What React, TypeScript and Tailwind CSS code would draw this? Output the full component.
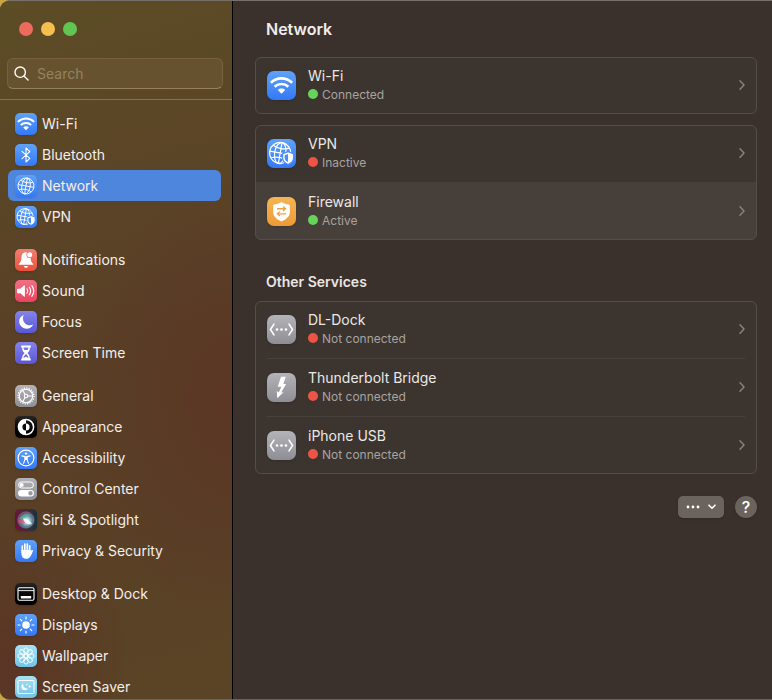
import React, { useState } from 'react';

type IconName =
  | 'wifi' | 'bluetooth' | 'globe' | 'vpn' | 'bell' | 'sound' | 'moon' | 'hourglass'
  | 'gear' | 'appearance' | 'accessibility' | 'toggles' | 'siri' | 'hand' | 'dock'
  | 'sun' | 'flower' | 'saver' | 'firewall' | 'ethernet' | 'bolt';

const BLUE = 'bg-linear-to-b from-[#5fa2f8] to-[#3478f6]';
const GRAY = 'bg-linear-to-b from-[#b4b3b8] to-[#8f8e94]';
const BLACK = 'bg-linear-to-b from-[#262626] to-[#000000]';
const PURPLE = 'bg-linear-to-b from-[#8583ec] to-[#5a56d6]';
const CYAN = 'bg-linear-to-b from-[#a5e2f5] to-[#6fc4e8]';

const tiles: Record<IconName, string> = {
  wifi: BLUE,
  bluetooth: BLUE,
  globe: BLUE,
  vpn: BLUE,
  bell: 'bg-linear-to-b from-[#f07f72] to-[#ea4f3d]',
  sound: 'bg-linear-to-b from-[#ef6f86] to-[#ea4360]',
  moon: PURPLE,
  hourglass: PURPLE,
  gear: GRAY,
  appearance: BLACK,
  accessibility: BLUE,
  toggles: GRAY,
  siri: 'bg-linear-to-r from-[#6a1036] to-[#0c3340]',
  hand: BLUE,
  dock: BLACK,
  sun: BLUE,
  flower: CYAN,
  saver: CYAN,
  firewall: 'bg-linear-to-b from-[#f5b555] to-[#ee9a35]',
  ethernet: GRAY,
  bolt: GRAY,
};

const globeLines = (
  <g fill="none" stroke="#fff" strokeWidth="0.9" transform="rotate(10 11 11)">
    <circle cx="11" cy="11" r="8" />
    <ellipse cx="11" cy="11" rx="4.2" ry="8" />
    <path d="M11 3v16M3 11h16M4.8 6.2c3.6 1.9 8.8 1.9 12.4 0M4.8 15.8c3.6-1.9 8.8-1.9 12.4 0" />
  </g>
);

const glyphs: Record<IconName, React.ReactNode> = {
  wifi: (
    <>
      <g fill="none" stroke="#fff" strokeWidth="2">
        <path d="M2.9 8.9c4.6-4.4 11.6-4.4 16.2 0" />
        <path d="M5.8 12c3-2.8 7.4-2.8 10.4 0" />
      </g>
      <path d="M8.2 14.4c1.6-1.4 4-1.4 5.6 0L11 17.3z" fill="#fff" />
    </>
  ),
  bluetooth: (
    <path d="M7 7.4l7.8 6.9L11 18V4l3.8 3.7L7 14.6" fill="none" stroke="#fff" strokeWidth="1.1" strokeLinejoin="round" strokeLinecap="round" />
  ),
  globe: globeLines,
  vpn: (
    <>
      <g transform="translate(-1 -0.4)">{globeLines}</g>
      <path d="M16 9.6l4.1 1.5v3.5c0 2.3-1.8 3.7-4.1 4.7-2.3-1-4.1-2.4-4.1-4.7v-3.5z" fill="#fff" stroke="#4a8df7" strokeWidth="0.9" />
      <path d="M16 11.4v6.2c-1.6-.8-2.6-1.6-2.6-3.1v-2.2z" fill="#4a8df7" />
    </>
  ),
  bell: (
    <>
      <path d="M11 3.3c-3 0-4.6 2.2-4.6 5.2 0 3.4-.8 4.8-2.6 6.4v.9h14.4v-.9c-1.8-1.6-2.6-3-2.6-6.4 0-3-1.6-5.2-4.6-5.2z" fill="#fff" />
      <path d="M9 16.9h4c-.2 1.2-1 1.900-2 1.900s-1.800-.7-2-1.900z" fill="#fff" />
      <circle cx="14.7" cy="5.7" r="3.3" fill="#ee6f61" />
      <circle cx="14.7" cy="5.7" r="2.5" fill="#fff" />
    </>
  ),
  sound: (
    <>
      <path d="M2.6 8.700h2.700l3.700-3.300c.4-.3.9-.1.9.4v10.400c0 .5-.5.7-.9.4l-3.700-3.300H2.600c-.4 0-.6-.2-.6-.6V9.300c0-.4.2-.6.6-.6z" fill="#fff" />
      <path d="M12 8.800c.9 1.300.9 3.100 0 4.400M14.300 7.300c1.600 2.200 1.600 5.200 0 7.400M16.800 5.700c2.400 3.200 2.400 7.400 0 10.600" fill="none" stroke="#fff" strokeWidth="1.1" strokeLinecap="round" />
    </>
  ),
  moon: <path d="M8.600 4.100c-3 1.200-4.700 4-4.400 7 .4 3.800 3.700 6.700 7.500 6.700 2.900 0 5.400-1.700 6.400-4.200-1 .5-2 .7-3.100.7-4 0-7-3.100-7-6.900 0-1.200.2-2.300.6-3.300z" fill="#fff" />,
  hourglass: (
    <path fillRule="evenodd" d="M6.200 3.500h9.600v1.900h-.9c0 2.600-.8 4-2.500 5.600 1.700 1.600 2.500 3 2.500 5.600h.9v1.900H6.200v-1.900h.9c0-2.600.8-4 2.500-5.600-1.700-1.600-2.500-3-2.500-5.600h-.9zM8.500 5.400c.1 1 .4 1.900.9 2.600h3.200c.5-.7.8-1.600.9-2.600zM11 12c-1.500 1.300-2.300 2.600-2.500 4.200L11 14.500l2.500 1.700c-.2-1.600-1-2.900-2.500-4.200z" fill="#fff" />
  ),
  gear: (
    <>
      <circle cx="11" cy="11" r="7.9" fill="none" stroke="#fff" strokeWidth="1.4" strokeDasharray="1.24 1.24" />
      <g fill="none" stroke="#fff" strokeWidth="1.1">
        <circle cx="11" cy="11" r="6.7" />
        <circle cx="11" cy="11" r="1.7" />
        <path d="M12.700 11h5M10.100 9.500L7.700 5.200M10.100 12.500l-2.400 4.300" />
      </g>
    </>
  ),
  appearance: (
    <>
      <circle cx="11" cy="11" r="7.6" fill="none" stroke="#fff" strokeWidth="1.5" />
      <path d="M11 3.400a7.600 7.600 0 0 0 0 15.200v-4a3.600 3.600 0 0 1 0-7.200z" fill="#fff" />
      <path d="M11 7.400a3.600 3.600 0 0 1 0 7.200z" fill="#fff" />
    </>
  ),
  accessibility: (
    <>
      <circle cx="11" cy="11" r="7.9" fill="none" stroke="#fff" strokeWidth="1.2" />
      <circle cx="11" cy="6.6" r="1.2" fill="#fff" />
      <path d="M6.900 8.900l3 .7v2.700l-1.300 4M15.100 8.900l-3 .7v2.700l1.300 4" fill="none" stroke="#fff" strokeWidth="1.1" strokeLinecap="round" strokeLinejoin="round" />
      <path d="M9.700 9.200h2.600v3.800H9.700z" fill="#fff" />
    </>
  ),
  toggles: (
    <>
      <rect x="3.6" y="4" width="14.8" height="6" rx="3" fill="none" stroke="#fff" strokeWidth="1" />
      <circle cx="6.6" cy="7" r="2.1" fill="#fff" />
      <rect x="3.1" y="12" width="15.8" height="6.6" rx="3.3" fill="#fff" />
      <circle cx="15.5" cy="15.3" r="2.2" fill="#9b9a9f" />
    </>
  ),
  siri: (
    <>
      <defs>
        <radialGradient id="siri" cx="0.55" cy="0.55" r="0.55">
          <stop offset="0" stopColor="#ffffff" />
          <stop offset="0.3" stopColor="#a3d3e0" />
          <stop offset="0.65" stopColor="#5c7f92" />
          <stop offset="1" stopColor="#7a3a68" />
        </radialGradient>
      </defs>
      <circle cx="11" cy="11" r="8.2" fill="url(#siri)" />
      <path d="M4 10c3-5 9-7 13-3-4-1-7 0-9 4z" fill="#4cc08d" opacity="0.6" />
      <path d="M3.500 12c2-3 5-3 8.500 0-3 3-7 4-8.500 0z" fill="#e0527f" opacity="0.7" />
      <path d="M8 9.500c4 0 7 2 9 5.500-4 1-8-1-9-5.500z" fill="#fff" opacity="0.85" />
      <circle cx="11" cy="11" r="8.2" fill="none" stroke="#b0a0b8" strokeWidth="0.5" opacity="0.7" />
    </>
  ),
  hand: (
    <>
      <path d="M7.300 6.200v6M9.800 4.200v7M12.300 4v7M14.700 5.900v6" stroke="#fff" strokeWidth="1.7" strokeLinecap="round" />
      <path d="M6.450 10h9.100v1.500l1-1.300c.6-.7 1.800-.1 1.400.8-1 2.600-1.800 4.600-2.900 5.900-1 1.200-2.200 1.800-3.900 1.800-3 0-4.700-1.900-4.700-5z" fill="#fff" />
    </>
  ),
  dock: (
    <>
      <rect x="3" y="4.8" width="16" height="12.4" rx="1.4" fill="none" stroke="#fff" strokeWidth="1.1" />
      <path d="M3 7.600h16" stroke="#fff" strokeWidth="0.9" />
      <rect x="5.8" y="13" width="10.4" height="2.4" rx="0.4" fill="#fff" />
    </>
  ),
  sun: (
    <>
      <circle cx="11" cy="11" r="3.8" fill="#fff" />
      <path d="M11 3v2M11 17v2M3 11h2M17 11h2M5.300 5.300l1.500 1.500M15.200 15.200l1.500 1.500M5.300 16.700l1.500-1.500M15.200 6.800l1.500-1.500" stroke="#fff" strokeWidth="1.2" strokeLinecap="round" />
    </>
  ),
  flower: (
    <g fill="none" stroke="#fff" strokeWidth="0.9">
      {[0, 45, 90, 135, 180, 225, 270, 315].map(a => (
        <ellipse key={a} cx="11" cy="6" rx="2.3" ry="3.2" transform={`rotate(${a} 11 11)`} />
      ))}
      <circle cx="11" cy="11" r="2" />
    </g>
  ),
  saver: (
    <>
      <rect x="3" y="4.5" width="16" height="13" rx="0.8" fill="none" stroke="#fff" strokeWidth="1" />
      <path d="M8.400 7.800c-1.400.6-2.200 1.900-2 3.400.2 1.800 1.700 3.100 3.500 3.100 1.400 0 2.600-.8 3.100-2-3 .7-5.200-1.500-4.600-4.500z" fill="#fff" />
      <path d="M14.700 8.800l.5 1.300 1.300.5-1.300.5-.5 1.300-.5-1.300-1.300-.5 1.300-.5zM11.900 7.500l.3.8.8.3-.8.3-.3.8-.3-.8-.8-.3.8-.3z" fill="#fff" />
    </>
  ),
  firewall: (
    <>
      <path d="M11 3.700c1.800 1.200 3.600 1.800 5.400 1.900.6.100.9.400.9 1v5c0 3.200-2.600 5.300-6.300 6.900-3.700-1.600-6.300-3.700-6.300-6.900v-5c0-.6.3-.9.900-1 1.800-.1 3.600-.7 5.400-1.900z" fill="#fff" />
      <path d="M7.600 8.900h6.400M12.200 7.200l1.900 1.700-1.900 1.700M14.400 12.800H8M9.800 11.100l-1.900 1.700 1.900 1.700" fill="none" stroke="#efa040" strokeWidth="1" />
    </>
  ),
  ethernet: (
    <>
      <path d="M5.300 6.900L2.600 11l2.700 4.100M16.700 6.900l2.700 4.100-2.700 4.100" fill="none" stroke="#fff" strokeWidth="1.2" strokeLinecap="round" strokeLinejoin="round" />
      <circle cx="7.600" cy="11" r="1" fill="#fff" />
      <circle cx="11" cy="11" r="1" fill="#fff" />
      <circle cx="14.400" cy="11" r="1" fill="#fff" />
    </>
  ),
  bolt: <path d="M10.600 2.800h3.700L12.400 8.300h2.100l-3.700 6.500 1.700-.2-4.700 4.600-.4-5.600 1.500 1.100 2-4.200H8.200z" fill="#fff" />,
};

function Tile({ name, large }: { name: IconName; large?: boolean }) {
  return (
    <span className={`block shrink-0 overflow-hidden shadow-sm ${large ? 'size-[29px] rounded-[7px]' : 'size-[22px] rounded-[5px]'} ${tiles[name]}`}>
      <svg viewBox="0 0 22 22" className="size-full" aria-hidden="true">{glyphs[name]}</svg>
    </span>
  );
}

const groups: { icon: IconName; label: string }[][] = [
  [
    { icon: 'wifi', label: 'Wi-Fi' },
    { icon: 'bluetooth', label: 'Bluetooth' },
    { icon: 'globe', label: 'Network' },
    { icon: 'vpn', label: 'VPN' },
  ],
  [
    { icon: 'bell', label: 'Notifications' },
    { icon: 'sound', label: 'Sound' },
    { icon: 'moon', label: 'Focus' },
    { icon: 'hourglass', label: 'Screen Time' },
  ],
  [
    { icon: 'gear', label: 'General' },
    { icon: 'appearance', label: 'Appearance' },
    { icon: 'accessibility', label: 'Accessibility' },
    { icon: 'toggles', label: 'Control Center' },
    { icon: 'siri', label: 'Siri & Spotlight' },
    { icon: 'hand', label: 'Privacy & Security' },
  ],
  [
    { icon: 'dock', label: 'Desktop & Dock' },
    { icon: 'sun', label: 'Displays' },
    { icon: 'flower', label: 'Wallpaper' },
    { icon: 'saver', label: 'Screen Saver' },
  ],
];

interface Service {
  icon: IconName;
  name: string;
  status: string;
  on?: boolean;
  highlighted?: boolean;
}

const wifi: Service[] = [{ icon: 'wifi', name: 'Wi-Fi', status: 'Connected', on: true }];

const security: Service[] = [
  { icon: 'vpn', name: 'VPN', status: 'Inactive' },
  { icon: 'firewall', name: 'Firewall', status: 'Active', on: true, highlighted: true },
];

const others: Service[] = [
  { icon: 'ethernet', name: 'DL-Dock', status: 'Not connected' },
  { icon: 'bolt', name: 'Thunderbolt Bridge', status: 'Not connected' },
  { icon: 'ethernet', name: 'iPhone USB', status: 'Not connected' },
];

function ServiceCard({ services }: { services: Service[] }) {
  return (
    <ul className="overflow-hidden rounded-md bg-[#3c342f] outline-1 -outline-offset-1 outline-[#554d47]">
      {services.map((s, i) => (
        <li key={s.name} className={s.highlighted ? 'bg-[#473f3a]' : ''}>
          {i > 0 && <div className={`mx-3 h-px ${s.highlighted ? '' : 'bg-[#48403b]'}`} />}
          <button type="button" className="flex h-[57px] w-full items-center gap-3 px-3 pb-px text-left">
            <Tile name={s.icon} large />
            <span className="flex-1">
              <span className="block text-sm leading-[18px] text-[#ebe8e6]">{s.name}</span>
              <span className="flex items-center gap-1 text-xs leading-[19px] text-[#a8a3a0]">
                <span className={`size-[10px] rounded-full ${s.on ? 'bg-[#66d45b]' : 'bg-[#ec5545]'}`} />
                {s.status}
              </span>
            </span>
            <svg viewBox="0 0 6 10" className="h-[10px] w-[6px]" fill="none" stroke="#87807b" strokeWidth="1.5" strokeLinecap="round" strokeLinejoin="round" aria-hidden="true">
              <path d="M1 0.800L5 5 1 9.200" />
            </svg>
          </button>
        </li>
      ))}
    </ul>
  );
}

export default function App() {
  const [selected, setSelected] = useState('Network');
  const [query, setQuery] = useState('');

  return (
    <div className="h-screen overflow-hidden bg-[#c9a544] font-['Inter','Liberation_Sans',sans-serif]">
      <div className="flex h-full overflow-hidden rounded-l-[10px] border-y border-t-[#77706a] border-b-[#6a625c] bg-[#3a302c]">
        {/* Sidebar */}
        <aside className="flex w-[233px] shrink-0 flex-col border-r border-black bg-[#5b4226] bg-[radial-gradient(ellipse_150px_220px_at_100%_57%,#5b3625_0%,transparent_100%),radial-gradient(ellipse_130px_150px_at_0%_96%,#5b3425_0%,transparent_100%),linear-gradient(165deg,#5b4d25_0%,#5b4626_22%,#593f26_50%,#594025_75%,#5a4426_100%)]">
          <div className="flex gap-2 px-[19px] pt-[21px]">
            <button type="button" aria-label="Close" className="size-[14px] rounded-full bg-[#ed6a5e]" />
            <button type="button" aria-label="Minimize" className="size-[14px] rounded-full bg-[#f5bf4f]" />
            <button type="button" aria-label="Zoom" className="size-[14px] rounded-full bg-[#61c554]" />
          </div>

          <div className="border-b border-[#87714d] pt-[22px] pr-[9px] pb-[10px] pl-[7px]">
            <label className="flex h-[31px] items-center gap-2 rounded-md border border-[#75603f] border-b-[#968059] bg-[#66522f] px-[6px]">
              <svg viewBox="0 0 15 15" className="size-[15px] shrink-0" fill="none" stroke="#fff" strokeWidth="1.4" strokeLinecap="round" aria-hidden="true">
                <circle cx="6.2" cy="6.2" r="5.2" />
                <path d="M10 10l4 4" />
              </svg>
              <input
                type="text"
                aria-label="Search"
                placeholder="Search"
                value={query}
                onChange={e => setQuery(e.target.value)}
                className="w-full min-w-0 bg-transparent text-sm text-white outline-none placeholder:text-[#94835f]"
              />
            </label>
          </div>

          <nav className="flex flex-col gap-3 pt-2 pr-[11px] pl-2">
            {groups.map((group, i) => (
              <ul key={i}>
                {group.map(item => (
                  <li key={item.label}>
                    <button
                      type="button"
                      onClick={() => setSelected(item.label)}
                      className={`flex h-[31px] w-full items-center gap-[5px] rounded-md px-[7px] text-left text-sm text-[#f3efec] ${selected === item.label ? 'bg-[#4f86dd]' : ''}`}
                    >
                      <Tile name={item.icon} />
                      {item.label}
                    </button>
                  </li>
                ))}
              </ul>
            ))}
          </nav>
        </aside>

        {/* Content */}
        <main className="min-w-0 flex-1 pr-[15px] pl-[22px]">
          <h1 className="px-[11px] pt-4 pb-4 text-base font-semibold text-[#f0edeb]">Network</h1>
          <div className="flex flex-col gap-[11px]">
            <ServiceCard services={wifi} />
            <ServiceCard services={security} />
          </div>
          <h2 className="px-[11px] pt-8 pb-[9px] text-sm font-semibold text-[#eae6e4]">Other Services</h2>
          <ServiceCard services={others} />

          <div className="mt-[22px] flex justify-end gap-[11px]">
            <button type="button" aria-label="More options" className="flex h-[22px] w-[46px] items-center justify-center gap-2 rounded-[5px] bg-[#6a635e] shadow-sm">
              <svg viewBox="0 0 14 4" className="h-1 w-[14px]" fill="#fff" aria-hidden="true">
                <circle cx="2" cy="2" r="1.4" />
                <circle cx="7" cy="2" r="1.4" />
                <circle cx="12" cy="2" r="1.4" />
              </svg>
              <svg viewBox="0 0 8 6" className="h-[6px] w-2" fill="none" stroke="#fff" strokeWidth="1.6" strokeLinecap="round" strokeLinejoin="round" aria-hidden="true">
                <path d="M1 1.200l3 3 3-3" />
              </svg>
            </button>
            <button type="button" aria-label="Help" className="flex size-[22px] items-center justify-center rounded-full bg-[#6a635e] text-base font-medium text-white shadow-sm">?</button>
          </div>
        </main>
      </div>
    </div>
  );
}
